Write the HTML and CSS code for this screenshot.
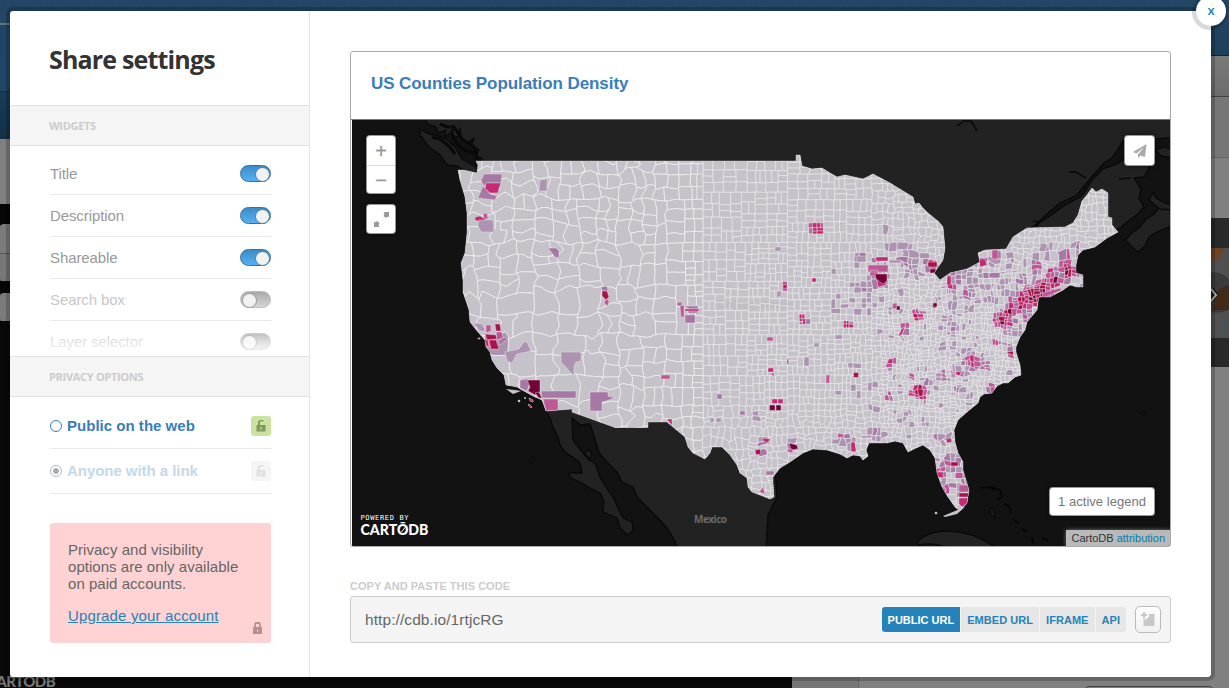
FILE: index.html
```
<!DOCTYPE html>
<html lang="en">
<head>
<meta charset="utf-8">
<title>Share settings</title>
<link rel="stylesheet" href="styles.css">
</head>
<body>
<div class="backdrop">
  <div class="bd-left"><i class="l1"></i><i class="l2"></i><i class="l3"></i><i class="l4"></i><i class="l5"></i><i class="l6"></i><i class="l7"></i></div>
  <div class="bd-right"><i class="r1"></i><i class="r2"></i><i class="r3"></i>
    <div class="r4"><svg width="18" height="149" viewBox="0 0 18 149"><rect width="18" height="149" fill="#292929"/><rect y="30" width="18" height="90" fill="#505050"/><path d="M0 44Q11 42 13 30H0z" fill="#6b4525"/><path d="M0 54Q12 54 18 62V92Q8 96 0 94z" fill="#3b3b3b"/><path d="M3 92Q1 70 18 67V92z" fill="#412a18"/><path d="M0 71l4 5-4 6" fill="none" stroke="#151515" stroke-width="5"/><path d="M0 71l5 6-5 6" fill="none" stroke="#aaa" stroke-width="2"/><path d="M14 104v7M14 104h4M14 107.500h4M14 111h4" stroke="#2c5878" fill="none"/></svg></div>
    <i class="r5"></i></div>
  <div class="bd-bottom"><span class="bd-logo">CARTŌDB</span><i></i></div>
</div>

<main class="modal">
  <button class="close">x</button>
  <aside class="side">
    <h1>Share settings</h1>
    <h2>WIDGETS</h2>
    <ul class="widgets">
      <li><span>Title</span><b class="toggle on"></b></li>
      <li><span>Description</span><b class="toggle on"></b></li>
      <li><span>Shareable</span><b class="toggle on"></b></li>
      <li class="off"><span>Search box</span><b class="toggle"></b></li>
      <li class="off"><span>Layer selector</span><b class="toggle"></b></li>
    </ul>
    <h2>PRIVACY OPTIONS</h2>
    <ul class="privacy">
      <li><i class="radio"></i><span>Public on the web</span><em class="lock"><svg width="10" height="12" viewBox="0 0 10 12"><path d="M0.500 5H2V1.500L3.500 0h4v1.500H4V5h5.500v6.500h-9z"/><path class="hole" d="M4.300 7h1.400v2.500H4.300z"/></svg></em></li>
      <li class="dim"><i class="radio sel"></i><span>Anyone with a link</span><em class="lock"><svg width="10" height="12" viewBox="0 0 10 12"><path d="M0.500 5H2V1.500L3.500 0h4v1.500H4V5h5.500v6.500h-9z"/><path class="hole" d="M4.300 7h1.400v2.500H4.300z"/></svg></em></li>
    </ul>
    <div class="notice">
      <p>Privacy and visibility<br>options are only available<br>on paid accounts.</p>
      <a>Upgrade your account</a>
      <svg class="padlock" width="9" height="12" viewBox="0 0 9 12"><path d="M0 5h1.300V1.500L2.500 0h4L7.700 1.500V5H9v7H0zM3 5h3V2H3z" fill="#b39092" fill-rule="evenodd"/><path d="M4 7.500h1V10H4z" fill="#f3cacb"/></svg>
    </div>
  </aside>

  <section class="content">
    <div class="frame">
      <h3>US Counties Population Density</h3>
      <div class="map">
        <svg id="map" width="818" height="426" viewBox="352 120 818 426">
          <defs><clipPath id="usclip"><path id="usshape"/></clipPath></defs>
          <rect x="351" y="120" width="819" height="426" fill="#121212"/>
          <g fill="#222" stroke="#090909" stroke-width="1.300" stroke-linejoin="round">
            <path d="M424 118L428 124 436 127 438 133 446 130 445 137 450 133 453 129 452 139 458 136 460 128 461 139 467 143 474 138 472 145 479 150 476 156 482 158 490 290H1000L1034 226 1046 215 1060 203 1077 195 1090 179 1104 163 1112 158 1124 140 1175 138V112H424z"/>
            <path d="M1031 228L1050 216 1062 207 1082 196 1093 179 1103 169 1117 164 1127 157 1146 160 1149 168 1144 177 1134 178 1141 189 1139 199 1144 206 1139 213 1131 219 1121 227 1100 240 1040 260z"/>
            <path d="M1125 240l7-7 7-5 7-9 7-4 6-7 12-4V226l-14 6-8 5-4 9-7 6-6-5z"/>
            <path d="M1155 150l10-3 10 4v7l-14-2zM1149 200l4-7 4 6 8 4 8 2v5l-13-1z"/>
            <path d="M420 129l9 5 10 2 8 4 8 7 7 12 14 8 2 5-9 1-12-7-10-1-8-11-10-7-9-12z"/>
            <path d="M546 411L550 418 553 427 558 437 560 445 565 452 574 458 580 463 582 473 573 473 568 472 571 478 580 482 588 487 600 493 604 501 603 512 617 518 620 528 628 535 633 530 632 522 623 518 618 508 613 497 606 487 600 477 595 463 589 460 583 453 573 440 572 418 580 425 590 424 593 433 599 453 607 462 617 472 622 482 633 487 637 497 650 510 657 517 667 528 676 543 677 550H766L768 515 777 497 770 400H546z"/>
            <path d="M588 449l4 5-3 5-4-5zM532 456l2 1-1 6-2-1z"/>
            <path d="M918 541q10-9 25-10 22 0 36 7l15 8v6h-40q-14-11-36-7z"/>
            <path d="M990 508l3 1 2 9-4-3zM1140 413l5-1v3z"/>
          </g>
          <path d="M980 488l12-1 8 3 2 7-5 3M994 490l-5-3M1004 504l5 2 2 7M1013 519l6 5M1022 529l5 3M1032 537l1 7M1042 538l6 3" fill="none" stroke="#040404" stroke-width="1.500"/>
          <g fill="none" stroke="#090909" stroke-width="1.500"><path d="M957 126l7-5h7l6 10M1069 172l7 0 10 6M1119 179l12-1M1033 221l7 1-5 6"/></g>
          <path d="M432 137l8 2 9 7 6 8M440 124l7 3 7 0 8 12 12 8 5 18M452 133l4 10 10 8 8 2" fill="none" stroke="#090909" stroke-width="3"/>
          <g id="counties" clip-path="url(#usclip)"></g>
          <path id="usedge" fill="none" stroke="#e0dee2" stroke-width=".4"/>
          <g fill="#c6c3ca"><path d="M506 389l9 1 6 1-8 3z"/><circle cx="519" cy="401" r="1.300"/><circle cx="525" cy="398" r="1"/><circle cx="936" cy="513" r="1.300"/><path d="M943 516l17-7 5-2-8 7-12 3z"/></g>
          <path d="M529 398l4 2v2l-3-1zM529 404l3 3-1 1-3-3zM478 338h2v1h-2z" fill="#a9134c" stroke="#ddd" stroke-width=".6"/>
          <text x="694" y="523" class="country" textLength="33">Mexico</text>
          <text x="718" y="308" class="us">United States</text>
          <text x="360.500" y="520" class="powered" textLength="48">POWERED BY</text>
          <text x="360.500" y="535" class="logo" textLength="68" lengthAdjust="spacingAndGlyphs">CARTŌDB</text>
          <path d="M401.500 532l4-5" stroke="#fff"/>
        </svg>
        <div class="zoom"><b>+</b><b>−</b></div>
        <div class="full"><svg width="15" height="15" viewBox="0 0 15 15"><path d="M9.500 0H15v5.500L13.500 4.500 12 6 9.500 4 10.500 1.500zM0 15V9.500l1.500 1L3 9l2.500 2-1 2.500L5.500 15z" fill="#999"/></svg></div>
        <div class="send"><svg width="14" height="14" viewBox="0 0 14 14"><path d="M13.500 0L0 8l3.500 1.500L11 3 5 10.500V14l2.500-2.500L12 13z" fill="#aaa"/></svg></div>
        <div class="legend">1 active legend</div>
        <div class="attr">CartoDB <a>attribution</a></div>
      </div>
    </div>
    <h4>COPY AND PASTE THIS CODE</h4>
    <div class="code">
      <span class="url">http://cdb.io/1rtjcRG</span>
      <nav><a class="act">PUBLIC URL</a><a>EMBED URL</a><a>IFRAME</a><a>API</a></nav>
      <button class="copy"><svg width="14" height="15" viewBox="0 0 14 15"><path d="M2.500 6V14H13.500V2H7V6z" fill="#c8c8c8"/><path d="M2 0h2v2h2v2H4v2H2V4H0V2h2z" fill="#c8c8c8"/><path d="M2.500 7h3v-2h2V2" fill="none" stroke="#f8f8f8"/></svg></button>
    </div>
  </section>
</main>
<script src="map.js"></script>
</body>
</html>
```
FILE: styles.css
```
* { box-sizing: border-box; }
body { margin: 0; width: 1229px; height: 688px; overflow: hidden; position: relative; background: #080808; font-family: "Liberation Sans", sans-serif; }
h1, h2, h3, h4, ul, p { margin: 0; padding: 0; }
ul { list-style: none; }
i, em { font-style: normal; display: block; }

.backdrop { position: absolute; inset: 0; display: grid; grid-template: 11px 1fr 11px / 10px 1fr 18px; background: repeating-linear-gradient(65deg, #224664 0 9px, #244867 10px 11px); }
.bd-left { grid-area: 2 / 1; display: flex; flex-direction: column; }
.l1 { height: 128px; background: linear-gradient(#234765 0 12px, #65727c 12px 14px, #1e4566 14px, #1f4665 80px, #122e44 80px, #183c59 82px, #143047); }
.l2 { height: 66px; background: #808080; }
.l3 { height: 19px; background: #060606; }
.l4 { height: 58px; background: linear-gradient(#7b7b7b 0 29px, #555 29px 30px, #777 30px); border-radius: 4px 0 0 4px; }
.l5 { height: 11px; background: #060606; }
.l6 { height: 29px; background: #7b7b7b; border-radius: 4px 0 0 4px; }
.l3, .l5, .l7 { box-shadow: 0 0 0 1px #060606; }
.l7 { flex: 1; background: #090909; }
.bd-right { grid-area: 2 / 3; display: flex; flex-direction: column; }
.r1 { height: 45px; background: linear-gradient(#214563, #1e405c); border-bottom: 1px solid #222; }
.r2 { height: 41px; background: linear-gradient(#7a7a7a, #6c6c6c); border-bottom: 1px solid #444; }
.r3 { height: 121px; background: linear-gradient(#767676 0 60px, #666 60px 61px, #808080 61px); }
.r4 { height: 149px; }
.r4 svg { display: block; }
.r5 { flex: 1; background: #808080; }
.bd-bottom { grid-area: 3 / 1 / 4 / 4; background: linear-gradient(90deg, #090909 0 792px, #777 792px 858px, #666 858px 859px, #808080 859px); display: flex; justify-content: space-between; padding-right: 16px; }
.bd-bottom i { width: 128px; height: 8px; margin-top: 9px; border: 1px solid #444; border-radius: 4px; }
.bd-logo { font: 900 15px/12px Lato, sans-serif; color: #777; margin: -2px 0 0 -13px; letter-spacing: -.6px; }

.modal { position: absolute; left: 10px; top: 11px; width: 1201px; height: 666px; display: flex; background: #fff; border-radius: 3px; box-shadow: 0 0 0 4px rgba(0,0,0,.2); }
.close { position: absolute; right: -15px; top: -15px; width: 30px; height: 30px; padding: 0 0 2px; border: 0; border-radius: 50%; background: #fff; color: #2583b9; font: 600 13px/28px "Open Sans", sans-serif; box-shadow: -1px 1px 0 3px rgba(0,0,0,.15); }

.side { width: 300px; border-right: 1px solid #e5e5e5; }
.side h1 { height: 94px; padding: 30px 0 0 39px; font: bold 25px/36px "Open Sans", sans-serif; letter-spacing: -.83px; color: #333; white-space: nowrap; }
.side h2 { height: 41px; padding-left: 39px; border: solid #e2e2e2; border-width: 1px 0; background: #f5f5f5; font: bold 11px/39px "Open Sans", sans-serif; letter-spacing: -.3px; color: #ccc; }
.widgets { height: 210px; margin: 0 38px 0 40px; padding-top: 7px; overflow: hidden; position: relative; }
.widgets::after { content: ""; position: absolute; inset: 178px 0 0; background: linear-gradient(rgba(255,255,255,0), rgba(255,255,255,.85)); }
.widgets li { height: 42px; display: flex; align-items: center; justify-content: space-between; border-bottom: 1px solid #e9e9e9; font-size: 15px; letter-spacing: -.1px; color: #999; }
.widgets .off { color: #c8c8c8; }
.toggle { width: 31px; height: 17px; padding: 1px; border: 1px solid #bdbdbd; border-radius: 9px; background: linear-gradient(#aaa, #d5d5d5); display: flex; }
.toggle::before { content: ""; width: 13px; height: 13px; border-radius: 50%; background: #f2f2f2; border: 1px solid #999; }
.toggle.on { justify-content: flex-end; padding-right: 0; border-color: #35719f; background: linear-gradient(#3d8bc9, #57b0f2); }
.toggle.on::before { border-color: #407eae; }
.privacy { margin: 0 38px 0 40px; padding-top: 7px; }
.privacy li { height: 45px; border-bottom: 1px solid #e9e9e9; display: flex; align-items: center; font-weight: bold; font-size: 15px; letter-spacing: .02px; color: #397dba; }
.privacy li span { flex: 1; padding: 0 0 2px 5px; }
.radio { width: 12px; height: 12px; border: 1px solid #397dba; border-radius: 50%; }
.radio.sel { border-color: #a3bdd2; background: radial-gradient(circle, #aaa 0 2.500px, #fff 3.200px); }
.lock { width: 20px; height: 20px; border-radius: 3px; background: #cbe2a0; fill: #85995f; display: flex; align-items: center; justify-content: center; }
.lock .hole { fill: #cbe2a0; }
.privacy .dim { color: #c3d8ea; letter-spacing: -.05px; }
.dim .lock { background: #f5f5f5; fill: #e0e0e0; }
.dim .lock .hole { fill: #f5f5f5; }
.notice { position: relative; margin: 29px 38px 0 40px; height: 120px; padding: 18px; border-radius: 3px; background: #ffd3d3; color: #666; font-size: 15px; line-height: 17px; letter-spacing: .04px; }
.notice p { white-space: nowrap; margin-bottom: 15px; }
.notice a { color: #2583b9; text-decoration: underline; letter-spacing: .15px; }
.padlock { position: absolute; right: 9px; bottom: 9px; }

.content { flex: 1; padding: 40px 40px 0; }
.frame { height: 496px; border: 1px solid #aaa; border-radius: 3px; overflow: hidden; }
.frame h3 { height: 68px; padding-left: 20px; font: bold 17px/64px "Liberation Sans", sans-serif; letter-spacing: -.08px; color: #397dba; border-bottom: 1px solid #777; }
.map { position: relative; height: 426px; margin-left: 1px; }
.map > svg { display: block; }
.zoom, .full, .send, .legend { position: absolute; background: #fff; border-radius: 3px; box-shadow: 0 0 0 1px #999, 0 0 4px 1px rgba(0,0,0,.6); color: #999; display: flex; align-items: center; justify-content: center; }
.zoom { left: 15px; top: 16px; width: 28px; height: 57px; flex-direction: column; }
.zoom b { height: 29px; width: 28px; text-align: center; font: 20px/30px "Liberation Sans", sans-serif; -webkit-text-stroke: .3px #999; }
.zoom b + b { border-top: 1px solid #ddd; line-height: 28px; }
.full { left: 15px; top: 85px; width: 28px; height: 28px; }
.send { right: 16px; top: 16px; width: 29px; height: 29px; }
.legend { right: 16px; bottom: 31px; width: 104px; height: 27px; font-size: 13px; letter-spacing: .03px; color: #777; white-space: nowrap; }
.attr { position: absolute; right: 0; bottom: 0; height: 16px; padding: 0 5px; background: #b9b9b9; font-size: 11px; line-height: 16px; color: #333; white-space: nowrap; box-shadow: 0 0 4px rgba(190,190,190,.6); }
.attr a { color: #0b78ad; }
.country { font: bold 10px "Open Sans", sans-serif; fill: #6b6b6b; }
.us { font: bold 11px "Open Sans", sans-serif; fill: #aaa; opacity: .2; }
.powered { font: 7px "DejaVu Sans Mono", monospace; fill: #fff; }
.logo { font: 900 15px Lato, sans-serif; fill: #fff; }

.content h4 { margin-top: 32px; height: 17px; font-size: 11px; line-height: 15px; letter-spacing: .03px; color: #ccc; white-space: nowrap; }
.code { height: 47px; border: 1px solid #ccc; border-radius: 3px; background: #f4f4f4; display: flex; align-items: center; padding: 0 9px 0 14px; }
.url { flex: 1; font-size: 15.500px; letter-spacing: .08px; color: #666; }
.code nav { display: flex; gap: 1px; margin-right: 9px; border-radius: 3px; overflow: hidden; }
.code nav a { height: 25px; padding: 0 6px; background: #e6e6e6; color: #2583b9; font: bold 11px/26px "Liberation Sans", sans-serif; letter-spacing: .05px; white-space: nowrap; }
.code nav .act { background: #2583b9; color: #fff; letter-spacing: 0; }
.copy { width: 26px; height: 27px; padding: 0; border: 1px solid #bbb; border-radius: 5px; background: linear-gradient(#fff, #f1f1f1); display: flex; align-items: center; justify-content: center; }
```
FILE: map.js
```
// County choropleth: mesh of cells clipped to the country outline.
const outline = [458,170,460,180,465,197,467,213,467,233,465,253,461,263,463,280,463,292,469,310,470,322,478,332,485,340,486,347,490,352,492,360,497,368,504,375,506,385,517,387,522,390,533,396,542,400,546,411,572,409,572,412,615,427.5,648,427.5,648,422,667,422,673,427,685,437,688,447,693,453,705,459,710,453,712,447,722,447,730,455,737,465,740,473,747,478,748,487,752,492,760,495,770,499,774,497,773,483,773,477,780,468,790,462,803,453,813,449,827,450,840,454,847,458,853,455,860,456,863,460,868,456,866,450,869,443,887,443,895,441,903,443,908,452,916,448,923,445,930,450,935,458,937,473,942,487,948,497,955,507,960,511,967,503,969,490,963,470,963,462,958,453,955,442,954,430,958,420,967,412,978,403,980,397,984,394,992,393,997,386,1003,383,1008,383,1015,377,1021,375,1020,365,1016,352,1016,347,1020,337,1025,330,1027,322,1037,310,1038,302,1039,297,1050,297,1063,290,1070,285,1077,287,1083,287,1083,275,1076,273,1076,265,1078,255,1083,250,1095,247,1107,238,1118,232,1112,225,1112,218,1108,217,1108,193,1102,189,1096,192,1092,188,1087,195,1082,201,1078,215,1073,223,1065,227,1027,228,1013,237,1006,249,985,250,978,253,980,262,967,269,950,273,940,280,934,273,943,260,945,248,943,227,939,222,928,213,922,207,919,203,915,204,913,197,890,183,873,174,863,179,845,175,837,177,830,173,822,168,812,169,802,166,800,155,796,155,796,161,476,161,478,165,477,173,463,170];
let d = "";
for (let i = 0; i < outline.length; i += 2) d += (i ? "L" : "M") + outline[i] + " " + outline[i + 1];
d += "Z";
document.getElementById("usshape").setAttribute("d", d);
document.getElementById("usedge").setAttribute("d", d);

let seed = 77123;
const rnd = () => { seed = (seed * 1664525 + 1013904223) >>> 0; return seed / 4294967296; };
const hash = (x, y, k) => { const v = Math.sin(x * 127.1 + y * 311.7 + k * 74.7) * 43758.5453; return v - Math.floor(v) - 0.5; };
function noise(x, y, k, s) {
  x /= s; y /= s;
  const a = Math.floor(x), b = Math.floor(y), u = x - a, v = y - b;
  return (hash(a, b, k) * (1 - u) + hash(a + 1, b, k) * u) * (1 - v) + (hash(a, b + 1, k) * (1 - u) + hash(a + 1, b + 1, k) * u) * v;
}
const clamp = (t) => Math.max(0, Math.min(1, t));
// dense urban corridors with small counties
const dense = [[1003,321,9],[1021,303,9],[1034,295,10],[1046,288,9],[1069,271,8],[919,393,9],[817,228,7],[918,316,6],[848,325,5],[803,319,5]];
// typical county width at a position
function size(x, y) {
  for (const [a, b, r] of dense) if (Math.hypot(x - a, y - b) < r) return 4;
  if (x < 600) return y > 300 ? 23 : 15.5;
  if (x < 690) return y < 250 ? 13 : y < 340 ? 17 : 15;
  if (x < 750) return y > 430 ? 9 : y < 225 ? 10 : 8.6;
  if (x < 830) return y < 225 ? 9 : 7;
  if (x > 1060) return 7;
  if (y < 262) return x > 1000 ? 6.5 : x < 870 ? 8 : 7;
  if (x < 880) return 6.2;
  return y > 430 ? 6 : y > 310 ? 4.7 : 5.3;
}
function wiggle(x, y) {
  const west = clamp((690 - x) / 60), east = clamp((x - 840) / 60), south = clamp((y - 395) / 30);
  const amp = 0.6 + west * 9 + Math.max(east, south) * 4;
  const s = x < 690 ? 9 : 5;
  return [x + noise(x, y, 1, s) * amp, y + noise(x, y, 2, s) * amp];
}
const ramp = ["#ac94b1", "#a678a4", "#bd5796", "#c32a72", "#a9134c", "#730438"];
// metro areas: x, y, radius, strength
const metros = [
  [817,228,8,5.4],[881,279,9,3],[877,262,9,1.5],[932,266,8,4],[913,264,14,1.2],[892,240,12,.3],[951,286,6,4],[968,297,5,3.6],[982,260,5,3],[996,255,6,1.5],[1012,260,5,2.6],
  [848,325,6,5],[803,319,6,4.6],[918,316,7,5],[898,308,3.5,5],[935,305,3.5,5],[904,330,5,4.5],[919,393,9,5.6],[891,361,5,5],[793,446,7,2],
  [760,451,4,2],[766,440,5,2],[768,428,4,1.2],[889,398,5,3.4],[911,375,4,3.4],[943,377,5,3.2],[958,373,5,4.6],[972,362,10,3.8],[984,366,6,4],[958,390,6,2.4],[992,389,4,3.6],
  [1003,321,10,6],[1010,310,9,5],[1021,303,11,5.3],[1032,296,12,6],[1044,290,12,5.6],[1055,281,9,5],[1069,271,10,5.8],[1066,259,8,3.6],[1052,272,6,4],[1037,265,5,4],[1077,246,7,.8],
  [997,342,4,4.5],[1012,352,5,5],[940,440,7,1.2],[950,440,4,4.6],[941,472,8,4],[953,465,8,3.6],[963,490,8,2.5],[945,487,8,3.5],[963,474,8,2.6],[955,457,8,1.8],[848,442,10,1.3],
  [842,438,3,4],[854,447,4,3.5],[876,435,10,1],[862,294,9,1],[837,275,7,.6],[870,300,9,.7],[924,252,7,1],[860,260,6,1.4],[905,262,4,3.4],[958,278,10,1.7],[1030,280,12,1.2],[1050,250,10,.7],[1015,330,9,1.3],
  [950,325,12,.5],[806,360,5,1],[828,381,3,2.8],[755,417,3,1],[904,418,8,.6],[923,340,3,4],[814,280,2.5,4],[784,287,2.5,4],
  [980,355,8,1],[930,385,10,.8],[967,400,8,.8],[1028,318,7,2.6],[492,343,8,1.5],[963,350,7,.7],[990,276,30,.5],[960,290,24,.6]
];
const cells = [];
function split(x0, y0, x1, y1) {
  const cx = (x0 + x1) / 2, cy = (y0 + y1) / 2, s = size(cx, cy), w = x1 - x0, h = y1 - y0;
  if (w * h < s * s * (1.1 + rnd() * .6)) { cells.push([x0, y0, x1, y1]); return; }
  const f = w > 100 || h > 100 ? .5 : .42 + rnd() * .16;
  if (w > h * (.8 + rnd() * .4)) { const m = x0 + w * f; split(x0, y0, m, y1); split(m, y0, x1, y1); }
  else { const m = y0 + h * f; split(x0, y0, x1, m); split(x0, m, x1, y1); }
}
split(450, 150, 1125, 520);
function edge(ax, ay, bx, by) {
  const n = Math.max(1, Math.round(Math.hypot(bx - ax, by - ay) / 2.5));
  let s = "";
  for (let i = 0; i < n; i++) { const p = wiggle(ax + (bx - ax) * i / n, ay + (by - ay) * i / n); s += "L" + p[0].toFixed(1) + " " + p[1].toFixed(1); }
  return s;
}
let out = '<rect x="450" y="150" width="680" height="380" fill="#c5c2c9"/>';
for (const [a, b, c, e] of cells) {
  const cx = (a + c) / 2, cy = (b + e) / 2;
  let heat = cx > 830 && cy > 245 && rnd() < .07 ? 1 : 0;
  for (const [mx, my, r, p] of metros) {
    const q = Math.hypot(cx - mx, cy - my) / r;
    if (q < 1) heat = Math.max(heat, p * (1 - q * .6) + rnd() * 2.2 - 1);
  }
  const level = Math.min(6, Math.round(heat));
  const fill = level > 0 ? ramp[level - 1] : "#c5c2c9";
  const path = "M" + (edge(a, b, c, b) + edge(c, b, c, e) + edge(c, e, a, e) + edge(a, e, a, b)).slice(1) + "Z";
  out += '<path d="' + path + '" fill="' + fill + '" stroke="#eeedf0" stroke-width="' + (cx < 700 ? .85 : level > 2 ? .4 : .6) + '"/>';
}
// individually shaped counties
const shapes = [
  ["M484 174l18 0-1 9-14 0-3 3-3-5z",1],["M486 183h15l-2 5-1 5-8 0-5-4z",3],["M483 186l3 3 4 5 7 2-2 4-17-2 2-5z",1],
  ["M475 217l5-1 3 2 4-3v4l-7 3-5-2z",3],["M483 214l4-1 1 6-4 0z",2],["M479 220l14 0 1 12-13 0-3-6z",0],["M540 180l7-1v12h-8z",0],["M548 248h8l3 3v7l-4-1z",1],
  ["M601 287l6-1 1 5-6 0z",1],["M602 291l5 0 2 6-3 3-4-4z",4],["M606 299l3 1-1 6-4-3z",2],
  ["M561 352h20v9l-5 1-2 4v10l-13-14z",0],["M505 352l14-3 5-7 3 0 4 9-14 3-5 9-5-2z",0],["M520 380l8-1 2 4-3 8-7-3z",1],["M528 380h12v12l-5 3-7-4 2-4-2-5z",5],["M535 393l4-1 3 6-3 0z",5],["M541 391h35v7h-34z",1],["M543 399h15v12h-12z",2],
  ["M590 392h18v4l7 2-9 3-4 1v9h-12z",1],["M486 325l5 0 0 6-5 2z",2],["M495 324l5 0 1 7-5 0z",4],["M473 323l9 1 4 7-6 0z",0],["M485 334l11 1 1 4-10 1z",4],["M484 339l4 1 1 7-4-2z",3],["M489 340l7 0 3 9-8 0z",4],["M496 332l6 0 1 6-6 2z",2],["M498 341l6-4 4 2-8 6z",1],
  ["M677 302h5v4h-5zM685 315h10v8h-10z",1],["M680 306l4-1v12h-3z",2],["M684 306h14v3h-9zM688 310h10v3h-10z",1],["M685 309h14v2h-14z",3],["M661 375h9v4h-9z",2],["M667 419h5v7z",3],
  ["M772 399h5.500v4.500h-5.500zM778 399h5v4.500h-5z",3],["M769.500 405h5.500v5.500h-5.500zM776 405h5v5.500h-5z",5],["M789 443l8 2 1 4-7 1z",5],["M787 449l5 0 1 4-5-1z",2],["M755 450l5-1 1 5-5 1z",4],["M763 438l7 1-2 4-5-2z",3],
  ["M876 257h12v4h-12zM877 280l9 0 0 5-8 2z",3],["M868 265h20v7h-20zM870 270h8v6h-8z",2],["M857 256h9v6h-9zM889 260h12v3h-12z",0],["M875 274h12v7l-4 3-7-5z",5],["M928 262h9v5h-9z",4],["M930 269h6v4h-6z",5],["M767 337h6v4h-6z",2],["M768 368h5.500v4h-5.500z",3],["M770 373h4v4z",2],["M853.500 372.500h5v5h-5z",4],["M787 359h1.500v5h-1.500z",3],
  ["M717 394h5v5h-5zM740 411h5v4h-5z",1],["M710 418h4v4h-4zM716 418h5v4h-5zM775 247h6v4h-6zM777 291h4v6h-4zM804 357h5v9h-5zM814 343h5v4h-5z",0],["M812 278h4v4h-4z",3],["M783 285h4v3h-4z",4],["M766 471h8v4h-8z",1],["M759 492l4-5 2 7z",2],
  ["M959 485h10v7h-10z",2],["M936 472h7v6l-7-1z",3],["M951 462h7v4h-7z",4],["M946 439l5-1 1 4-5 1z",3],["M959 493h10v4h-10z",4],["M959 498h9v5l-6 4-3-3z",3],["M992 250h6v9h-6z",2],["M979 259h6l2 6-7 2z",3],["M896.500 306l3.500 0 0 4-3.500 0zM933 303h4v4h-4z",5],
  ["M947 276h4v9h-4z",3],["M1042 293l18-5 2 2-19 8z",2]
];
for (const [p, c] of shapes) out += '<path d="' + p + '" fill="' + ramp[c] + '" stroke="#eeedf0" stroke-width=".4"/>';
document.getElementById("counties").innerHTML = out;
```
